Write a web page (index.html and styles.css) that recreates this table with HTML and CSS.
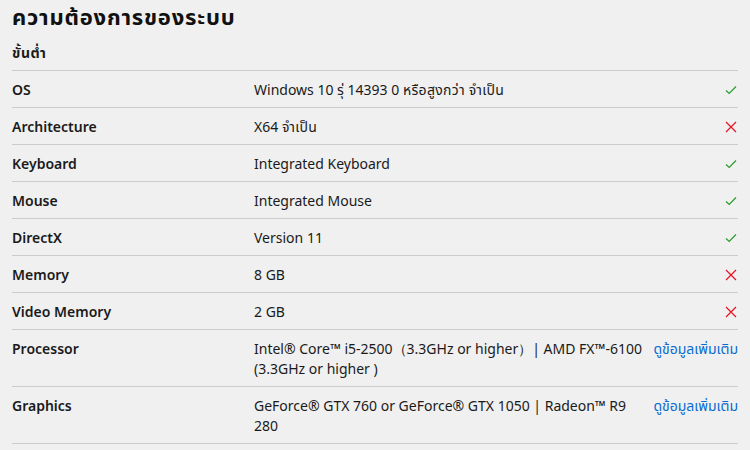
FILE: index.html
```html
<!DOCTYPE html>
<html lang="th">
<head>
<meta charset="utf-8">
<link rel="stylesheet" href="styles.css">
</head>
<body>
<div class="page">
  <h1 class="title">ความต้องการของระบบ</h1>
  <h2 class="subtitle">ขั้นต่ำ</h2>
  <div class="table">
    <div class="row">
      <div class="label">OS</div>
      <div class="value">Windows 10 รุ่ 14393 0 <span class="th">หรือสูงกว่า จำเป็น</span></div>
      <div class="status"><svg class="ok" viewBox="0 0 12 12"><path d="M1 6.5 L4.2 9.5 L11 2.5"/></svg></div>
    </div>
    <div class="row">
      <div class="label">Architecture</div>
      <div class="value">X64 <span class="th">จำเป็น</span></div>
      <div class="status"><svg class="bad" viewBox="0 0 12 12"><path d="M1 1 L11 11 M11 1 L1 11"/></svg></div>
    </div>
    <div class="row">
      <div class="label">Keyboard</div>
      <div class="value">Integrated Keyboard</div>
      <div class="status"><svg class="ok" viewBox="0 0 12 12"><path d="M1 6.5 L4.2 9.5 L11 2.5"/></svg></div>
    </div>
    <div class="row">
      <div class="label">Mouse</div>
      <div class="value">Integrated Mouse</div>
      <div class="status"><svg class="ok" viewBox="0 0 12 12"><path d="M1 6.5 L4.2 9.5 L11 2.5"/></svg></div>
    </div>
    <div class="row">
      <div class="label">DirectX</div>
      <div class="value">Version 11</div>
      <div class="status"><svg class="ok" viewBox="0 0 12 12"><path d="M1 6.5 L4.2 9.5 L11 2.5"/></svg></div>
    </div>
    <div class="row">
      <div class="label">Memory</div>
      <div class="value">8 GB</div>
      <div class="status"><svg class="bad" viewBox="0 0 12 12"><path d="M1 1 L11 11 M11 1 L1 11"/></svg></div>
    </div>
    <div class="row">
      <div class="label">Video Memory</div>
      <div class="value">2 GB</div>
      <div class="status"><svg class="bad" viewBox="0 0 12 12"><path d="M1 1 L11 11 M11 1 L1 11"/></svg></div>
    </div>
    <div class="row tall">
      <div class="label">Processor</div>
      <div class="value">Intel® Core™ i5-2500（3.3GHz or higher）| AMD FX™-6100<br>(3.3GHz or higher )</div>
      <div class="status"><a class="more" href="#">ดูข้อมูลเพิ่มเติม</a></div>
    </div>
    <div class="row tall">
      <div class="label">Graphics</div>
      <div class="value">GeForce® GTX 760 or GeForce® GTX 1050 | Radeon™ R9<br>280</div>
      <div class="status"><a class="more" href="#">ดูข้อมูลเพิ่มเติม</a></div>
    </div>
  </div>
</div>
</body>
</html>
```

FILE: styles.css
```css
html, body {
  margin: 0;
  padding: 0;
  background: #f0f0f0;
}
body {
  font-family: "Noto Sans", "Noto Sans Thai", "DejaVu Sans", sans-serif;
  color: #1a1a1a;
  font-size: 14px;
}
.page {
  padding: 0 12px;
  width: 726px;
}
.title {
  margin: 0;
  padding-top: 2px;
  font-size: 22px;
  line-height: 29px;
  font-weight: 700;
  letter-spacing: 0.8px;
  color: #111;
}
.subtitle {
  margin: 0;
  padding-top: 12px;
  font-size: 14px;
  line-height: 20px;
  font-weight: 700;
  letter-spacing: 0.6px;
  height: 27px;
}
.table {
  border-top: 1px solid #cccccc;
}
.row {
  display: grid;
  grid-template-columns: 242px 1fr auto;
  align-items: center;
  height: 35px;
  padding-top: 1px;
  border-bottom: 1px solid #cccccc;
  line-height: 20px;
}
.row.tall {
  height: 56px;
  align-items: start;
  padding-top: 0;
}
.row.tall > div {
  padding-top: 9px;
}
.label {
  font-weight: 600;
}
.value {
  white-space: nowrap;
}
.th {
  letter-spacing: 0.3px;
}
.status {
  display: flex;
  justify-content: flex-end;
  align-items: center;
}
.status svg {
  width: 12px;
  height: 12px;
  margin-right: 1px;
  fill: none;
  stroke-width: 1.2;
}
.ok { stroke: #2b9b2b; }
.bad { stroke: #e81123; }
.more {
  color: #0a6ad0;
  text-decoration: none;
}
```
